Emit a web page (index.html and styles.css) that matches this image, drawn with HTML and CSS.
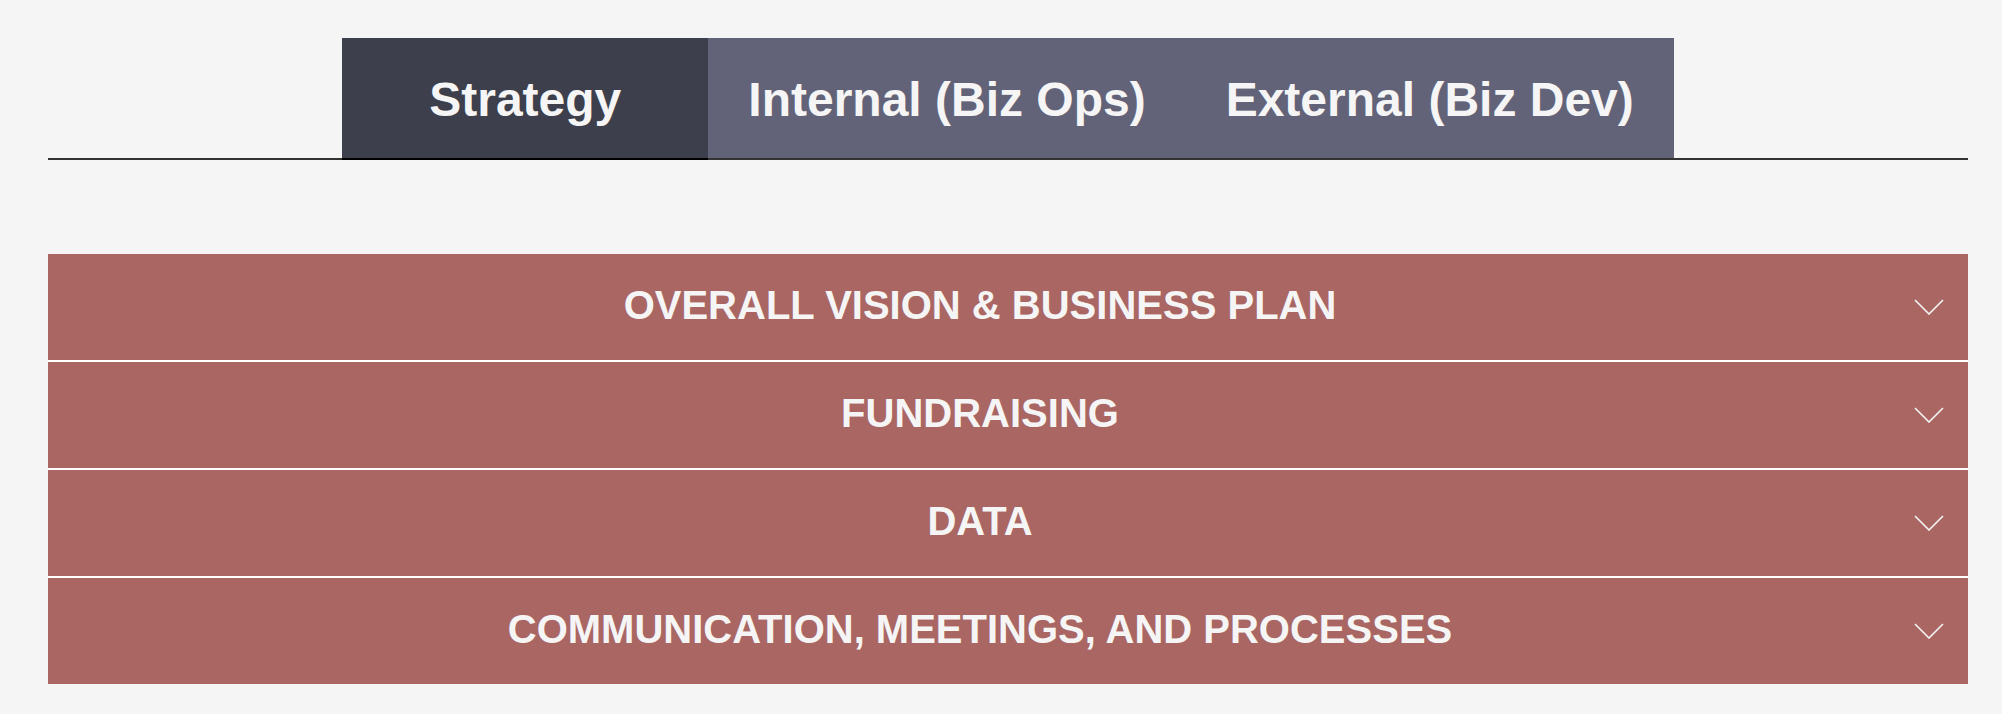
FILE: index.html
```html
<!DOCTYPE html>
<html lang="en">
<head>
<meta charset="utf-8">
<title>Tabs</title>
<link rel="stylesheet" href="styles.css">
</head>
<body>
<div class="page">
  <nav class="tablist">
    <div class="tab tab-active">Strategy</div>
    <div class="tab">Internal (Biz Ops)</div>
    <div class="tab">External (Biz Dev)</div>
  </nav>
  <section class="accordion">
    <div class="acc-row">
      <span class="acc-title">OVERALL VISION &amp; BUSINESS PLAN</span>
      <svg class="chev" width="30" height="16" viewBox="0 0 30 16"><polyline points="1,1 15,15 29,1" fill="none" stroke="#f5f5f5" stroke-width="1.6"/></svg>
    </div>
    <div class="acc-row">
      <span class="acc-title">FUNDRAISING</span>
      <svg class="chev" width="30" height="16" viewBox="0 0 30 16"><polyline points="1,1 15,15 29,1" fill="none" stroke="#f5f5f5" stroke-width="1.6"/></svg>
    </div>
    <div class="acc-row">
      <span class="acc-title">DATA</span>
      <svg class="chev" width="30" height="16" viewBox="0 0 30 16"><polyline points="1,1 15,15 29,1" fill="none" stroke="#f5f5f5" stroke-width="1.6"/></svg>
    </div>
    <div class="acc-row">
      <span class="acc-title">COMMUNICATION, MEETINGS, AND PROCESSES</span>
      <svg class="chev" width="30" height="16" viewBox="0 0 30 16"><polyline points="1,1 15,15 29,1" fill="none" stroke="#f5f5f5" stroke-width="1.6"/></svg>
    </div>
  </section>
</div>
</body>
</html>
```

FILE: styles.css
```css
html, body {
  margin: 0;
  padding: 0;
  background: #f5f5f5;
}

.page {
  padding: 38px 34px 0 48px;
  font-family: "Liberation Sans", Arial, sans-serif;
}

.tablist {
  display: flex;
  justify-content: center;
  border-bottom: 2px solid #333333;
}

.tab {
  height: 122px;
  box-sizing: border-box;
  padding: 2px 40px 0;
  display: flex;
  align-items: center;
  background: #626379;
  color: #f5f5f5;
  font-size: 48px;
  font-weight: bold;
  white-space: nowrap;
  margin-bottom: -2px;
  border-bottom: 2px solid #333333;
}

.tab-active {
  background: #3d3f4c;
  padding-left: 87px;
  padding-right: 87px;
  border-bottom-color: #000000;
}

.accordion {
  margin-top: 94px;
  display: flex;
  flex-direction: column;
  gap: 2px;
  background: #ffffff;
}

.acc-row {
  height: 106px;
  display: flex;
  align-items: center;
  gap: 20px;
  padding: 0 24px 0 18px;
  background: #a96663;
}

.acc-title {
  flex: 1;
  text-align: center;
  color: #f5f5f5;
  font-size: 40px;
  font-weight: bold;
  padding-bottom: 4px;
}

.chev {
  flex: none;
  display: block;
}
```
